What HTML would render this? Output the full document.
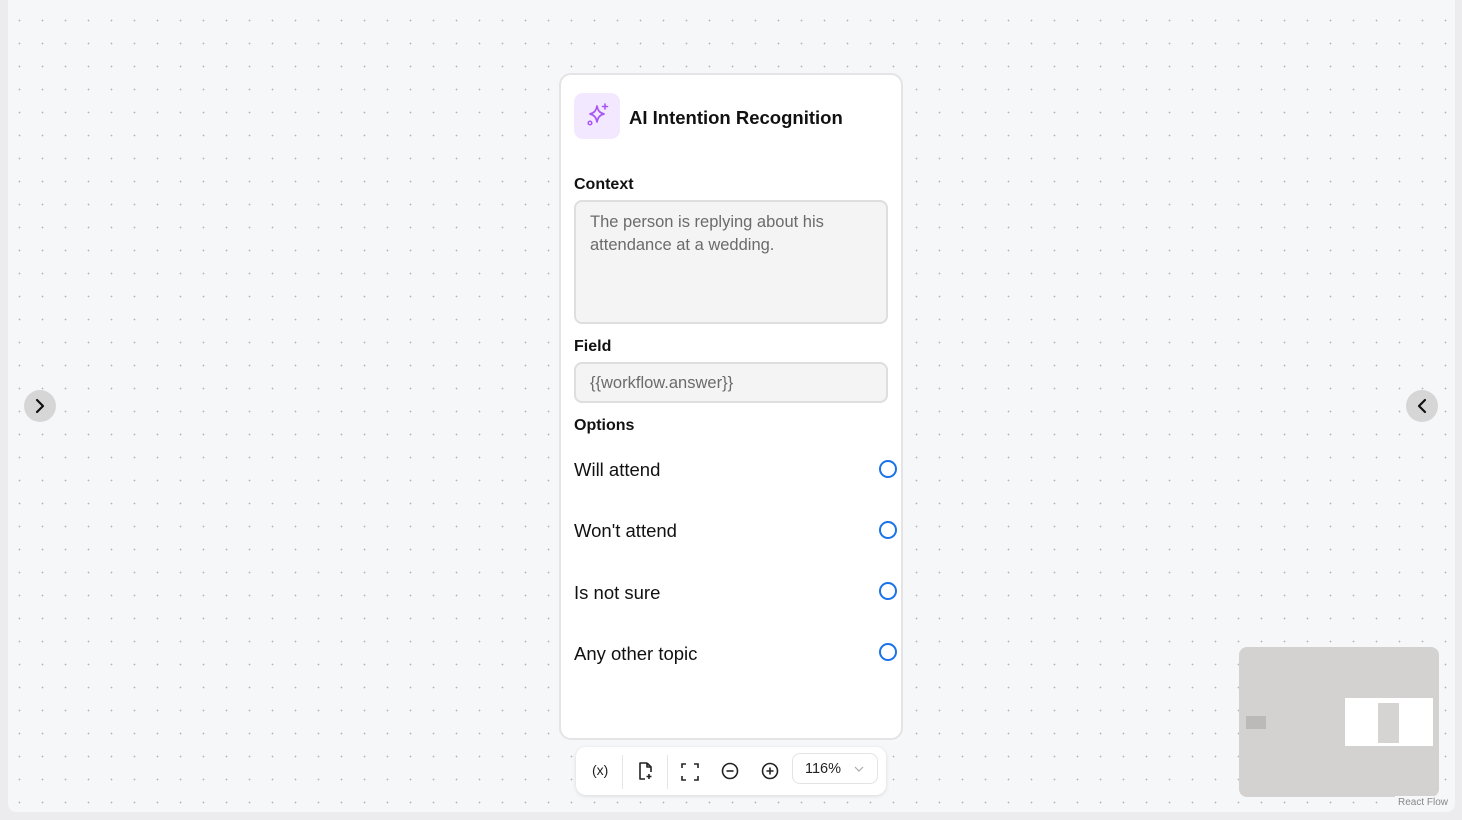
<!DOCTYPE html><html><head><style>
body{margin:0;width:1462px;height:820px;background:#ececee;font-family:"Liberation Sans",sans-serif;position:relative;overflow:hidden}
.canvas{position:absolute;left:8px;top:0;width:1447px;height:812px;background-color:#f6f7f9;background-image:radial-gradient(circle,#b4b4bc 0.7px,transparent 1px);background-size:23px 23px;background-position:0px 9px;border-radius:0 0 8px 8px}
.node{position:absolute;left:559px;top:73px;width:344px;height:667px;background:#fff;border:2px solid #e4e4e6;border-radius:12px;box-sizing:border-box}
.abs{position:absolute}
.lbl{position:absolute;left:13px;font-size:16px;font-weight:bold;color:#111}
.opt{position:absolute;left:13px;font-size:18.5px;color:#111}
.circ{position:absolute;left:318px;width:14px;height:14px;border:2px solid #1a73e8;border-radius:50%;background:#fff}
.btn{position:absolute;top:390px;width:32px;height:32px;border-radius:50%;background:#d6d6d6}
</style></head><body>
<div class="canvas"></div>
<div class="btn" style="left:24px"><svg width="32" height="32"><path d="M13 10l6 6-6 6" fill="none" stroke="#111" stroke-width="2.2" stroke-linecap="round" stroke-linejoin="round"/></svg></div>
<div class="btn" style="left:1406px"><svg width="32" height="32"><path d="M19 10l-6 6 6 6" fill="none" stroke="#111" stroke-width="2.2" stroke-linecap="round" stroke-linejoin="round"/></svg></div>
<div class="node">
 <div class="abs" style="left:13px;top:18px;width:46px;height:46px;background:#f2e8ff;border-radius:9px">
  <svg width="46" height="46" viewBox="0 0 46 46"><path d="M23 13c1 5 3 7 7 8-4 1-6 3-7 8-1-5-3-7-7-8 4-1 6-3 7-8z" fill="none" stroke="#a855f7" stroke-width="1.7" stroke-linejoin="round"/><path d="M31 11v5M28.5 13.5h5" stroke="#a855f7" stroke-width="1.6" stroke-linecap="round"/><circle cx="16" cy="30" r="1.8" fill="none" stroke="#a855f7" stroke-width="1.5"/></svg>
 </div>
 <div class="abs" style="left:68px;top:32px;font-size:18.5px;font-weight:bold;color:#111">AI Intention Recognition</div>
 <div class="lbl" style="top:101px">Context</div>
 <div class="abs" style="left:13px;top:125px;width:314px;height:124px;box-sizing:border-box;background:#f4f4f4;border:2px solid #dedede;border-radius:8px;padding:9px 14px;font-size:16.5px;line-height:23px;color:#6b6b6b">The person is replying about his attendance at a wedding.</div>
 <div class="lbl" style="top:263px">Field</div>
 <div class="abs" style="left:13px;top:287px;width:314px;height:41px;box-sizing:border-box;background:#f4f4f4;border:2px solid #dedede;border-radius:8px;padding:10px 14px;font-size:16.5px;color:#6b6b6b">{{workflow.answer}}</div>
 <div class="lbl" style="top:342px">Options</div>
 <div class="opt" style="top:384px">Will attend</div><div class="circ" style="top:385px"></div>
 <div class="opt" style="top:445px">Won't attend</div><div class="circ" style="top:446px"></div>
 <div class="opt" style="top:507px">Is not sure</div><div class="circ" style="top:507px"></div>
 <div class="opt" style="top:568px">Any other topic</div><div class="circ" style="top:568px"></div>
</div>
<div class="abs" style="left:576px;top:747px;width:310px;height:48px;background:#fff;border-radius:10px;box-shadow:0 1px 4px rgba(0,0,0,.12)">
 <div class="abs" style="left:16px;top:15px;font-size:14px;color:#222">(x)</div>
 <div class="abs" style="left:46px;top:8px;width:1px;height:34px;background:#e5e5e5"></div>
 <svg class="abs" style="left:60px;top:14px" width="18" height="20"><path d="M11 2H4v16h5M11 2l4 4v5M11 2v4h4M13 13v5M10.5 15.5h5" fill="none" stroke="#222" stroke-width="1.6" stroke-linejoin="round"/></svg>
 <div class="abs" style="left:91px;top:8px;width:1px;height:34px;background:#e5e5e5"></div>
 <svg class="abs" style="left:105px;top:16px" width="18" height="18"><path d="M1 5V1h4M13 1h4v4M17 13v4h-4M5 17H1v-4" fill="none" stroke="#222" stroke-width="1.6"/></svg>
 <svg class="abs" style="left:144px;top:14px" width="20" height="20"><circle cx="10" cy="10" r="7.5" fill="none" stroke="#222" stroke-width="1.6"/><path d="M6.5 10h7" stroke="#222" stroke-width="1.6"/></svg>
 <svg class="abs" style="left:184px;top:14px" width="20" height="20"><circle cx="10" cy="10" r="7.5" fill="none" stroke="#222" stroke-width="1.6"/><path d="M6.5 10h7M10 6.5v7" stroke="#222" stroke-width="1.6"/></svg>
 <div class="abs" style="left:216px;top:6px;width:86px;height:31px;border:1px solid #e3e3e3;border-radius:8px;box-sizing:border-box">
  <div class="abs" style="left:12px;top:7px;font-size:14.5px;color:#222">116%</div>
  <svg class="abs" style="left:61px;top:11px" width="10" height="8"><path d="M1 2l4 4 4-4" fill="none" stroke="#aaa" stroke-width="1.2"/></svg>
 </div>
</div>
<div class="abs" style="left:1239px;top:647px;width:200px;height:150px;background:#d3d2d1;border-radius:8px">
 <div class="abs" style="left:106px;top:51px;width:88px;height:48px;background:#fff"></div>
 <div class="abs" style="left:139px;top:56px;width:21px;height:40px;background:#d6d4d3"></div>
 <div class="abs" style="left:7px;top:69px;width:20px;height:13px;background:#bcbab9"></div>
</div>
<div class="abs" style="left:1395px;top:796px;font-size:10px;color:#888;background:#f6f7f9;padding:1px 3px">React Flow</div>
</body></html>
